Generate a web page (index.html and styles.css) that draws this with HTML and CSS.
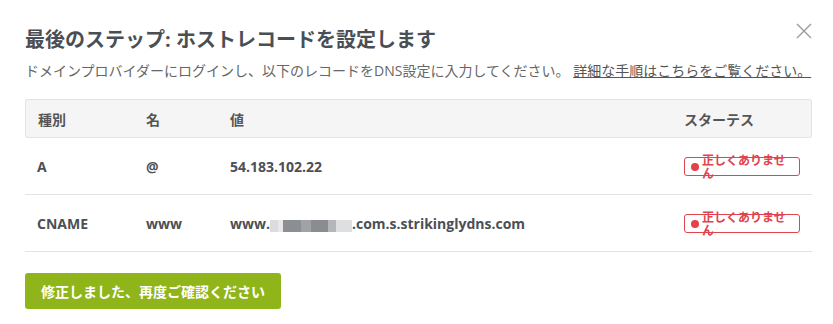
FILE: index.html
```html
<!DOCTYPE html>
<html lang="ja">
<head>
  <meta charset="UTF-8">
  <meta name="viewport" content="width=device-width, initial-scale=1.0">
  <title>ホストレコードを設定</title>
  <link rel="stylesheet" href="styles.css">
</head>
<body>
  <main class="modal">
    <button class="close" aria-label="閉じる">
      <svg width="16" height="16" viewBox="0 0 16 16"><path d="M1 1L15 15M15 1L1 15" stroke="#9a9a9a" stroke-width="1.4" fill="none"/></svg>
    </button>
    <h1>最後のステップ: ホストレコードを設定します</h1>
    <p class="lead">ドメインプロバイダーにログインし、以下のレコードをDNS設定に入力してください。 <a href="#">詳細な手順はこちらをご覧ください。</a></p>

    <table class="records">
      <thead>
        <tr>
          <th class="col-type">種別</th>
          <th class="col-name">名</th>
          <th class="col-value">値</th>
          <th class="col-status">スターテス</th>
        </tr>
      </thead>
      <tbody>
        <tr>
          <td>A</td>
          <td>@</td>
          <td>54.183.102.22</td>
          <td><span class="badge"><span class="dot"></span><span class="badge-text">正しくありません</span></span></td>
        </tr>
        <tr>
          <td>CNAME</td>
          <td>www</td>
          <td>www.<span class="blur"><i class="b1"></i><i class="b2"></i><i class="b3"></i><i class="b4"></i><i class="b5"></i><i class="b6"></i><i class="b7"></i></span>.com.s.strikinglydns.com</td>
          <td><span class="badge"><span class="dot"></span><span class="badge-text">正しくありません</span></span></td>
        </tr>
      </tbody>
    </table>

    <button class="retry">修正しました、再度ご確認ください</button>
  </main>
</body>
</html>
```

FILE: styles.css
```css
body{
  margin: 0;
  background: #fff;
  font-family: "Open Sans", "Noto Sans CJK JP", sans-serif;
  color: #4b4f56;
}

.modal{
  position: relative;
  padding: 26px 21px 16px 25px;
}

.close{
  position: absolute;
  top: 23px;
  right: 21px;
  border: 0;
  background: none;
  padding: 0;
  cursor: pointer;
}

h1{
  margin: 0;
  font-size: 20px;
  line-height: 28px;
  font-weight: bold;
  color: #4a4f55;
}

.lead{
  margin: 6px 0 0;
  font-size: 14px;
  line-height: 22px;
  color: #666;
}

.lead a{
  color: #555;
  text-decoration: underline;
}

.records{
  width: 100%;
  margin-top: 17px;
  border-collapse: separate;
  border-spacing: 0;
  font-size: 14px;
}

.records th{
  background: #f5f5f5;
  border-top: 1px solid #e3e3e3;
  border-bottom: 1px solid #e3e3e3;
  height: 37px;
  padding: 0 12px;
  text-align: left;
  font-weight: 600;
  color: #555;
}

.records th:first-child{
  border-left: 1px solid #e3e3e3;
  border-radius: 3px 0 0 3px;
}

.records th:last-child{
  border-right: 1px solid #e3e3e3;
  border-radius: 0 3px 3px 0;
}

.col-type{ width: 84px; }
.col-name{ width: 60px; }
.col-status{ width: 115px; }

.records td{
  height: 56px;
  padding: 0 12px;
  border-bottom: 1px solid #e3e3e3;
  font-weight: bold;
  color: #4b4f56;
}

.blur{
  display: inline-flex;
  vertical-align: -3px;
  height: 12px;
}

.blur i{
  display: block;
  height: 12px;
}

.b1{ width: 8px; background: #dcdcde; }
.b2{ width: 5px; background: #e8e8ea; }
.b3{ width: 18px; background: #8b8e93; }
.b4{ width: 10px; background: #a0a2a6; }
.b5{ width: 17px; background: #898c91; }
.b6{ width: 8px; background: #b4b6b9; }
.b7{ width: 16px; background: #dedfe1; }

.badge{
  display: inline-flex;
  align-items: center;
  box-sizing: border-box;
  width: 116px;
  height: 19px;
  border: 1px solid #e0444f;
  border-radius: 3px;
  padding-left: 6px;
}

.dot{
  flex: none;
  width: 8px;
  height: 8px;
  border-radius: 50%;
  background: #e5404b;
  margin-right: 3px;
}

.badge-text{
  width: 90px;
  font-size: 12px;
  line-height: 13px;
  font-weight: 600;
  color: #e0444f;
}

.retry{
  margin-top: 21px;
  width: 256px;
  height: 36px;
  border: 0;
  border-radius: 3px;
  background: #8fb51b;
  color: #fff;
  font-family: inherit;
  font-size: 14px;
  font-weight: bold;
  cursor: pointer;
}
```
